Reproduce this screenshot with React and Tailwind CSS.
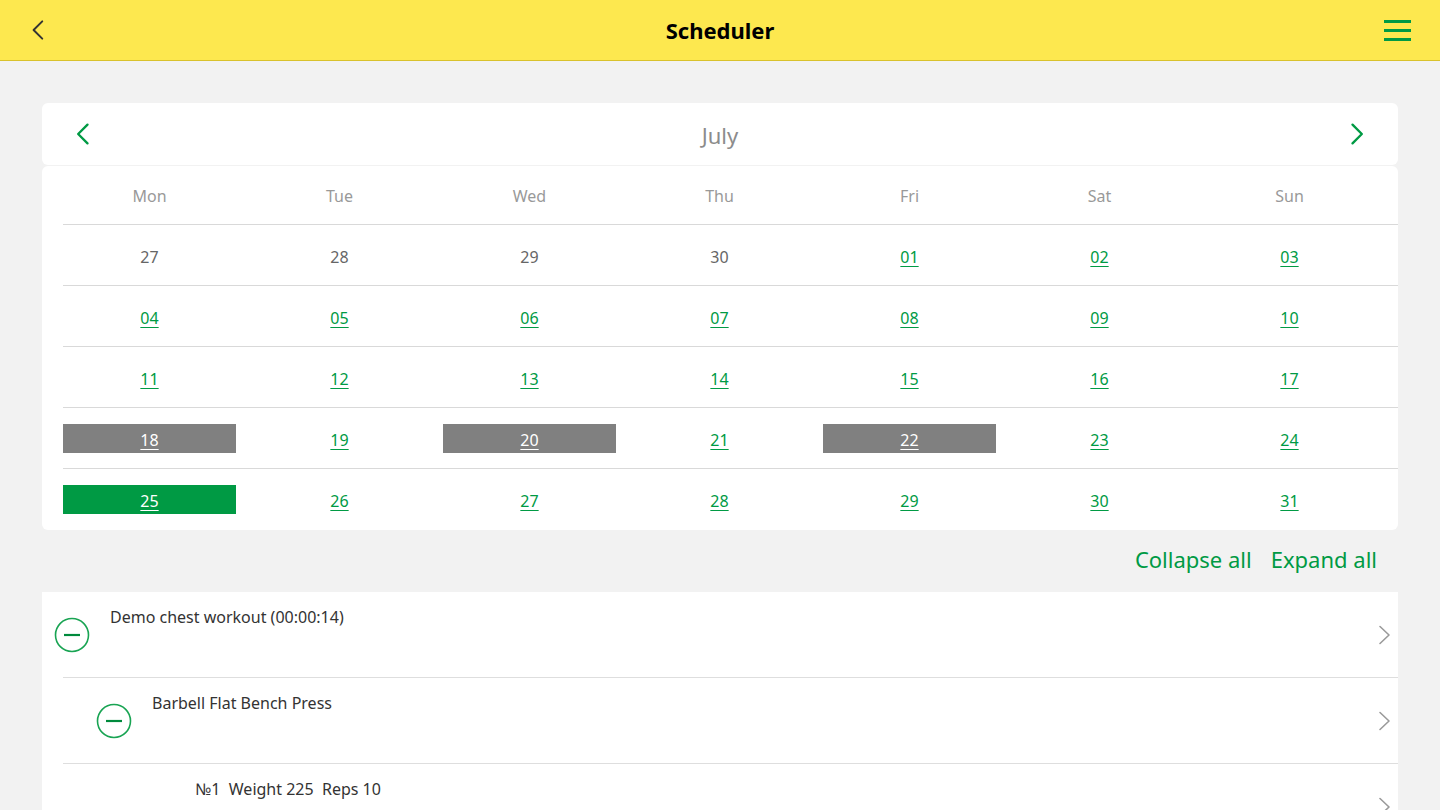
import React from "react";

function Chevron({ dir = "right", className = "", size = 24, stroke = 2 }) {
  const d = dir === "right" ? "M9 4l8 8-8 8" : "M15 4l-8 8 8 8";
  return (
    <svg width={size} height={size} viewBox="0 0 24 24" fill="none" className={className}>
      <path d={d} stroke="currentColor" strokeWidth={stroke} strokeLinecap="round" strokeLinejoin="round" />
    </svg>
  );
}

function ListChevron() {
  return (
    <svg width="14" height="20" viewBox="0 0 14 20" fill="none">
      <path d="M2 1.5l9 8.5-9 8.5" stroke="currentColor" strokeWidth="1.6" strokeLinecap="round" strokeLinejoin="round" />
    </svg>
  );
}

function MinusCircle() {
  return (
    <svg width="36" height="36" viewBox="0 0 36 36" fill="none">
      <circle cx="18" cy="18" r="16.5" stroke="#19a453" strokeWidth="1.6" />
      <line x1="10" y1="18" x2="26" y2="18" stroke="#008a3c" strokeWidth="2.2" />
    </svg>
  );
}

const weeks = [
  ["27", "28", "29", "30", "01", "02", "03"],
  ["04", "05", "06", "07", "08", "09", "10"],
  ["11", "12", "13", "14", "15", "16", "17"],
  ["18", "19", "20", "21", "22", "23", "24"],
  ["25", "26", "27", "28", "29", "30", "31"],
];
const days = ["Mon", "Tue", "Wed", "Thu", "Fri", "Sat", "Sun"];

function DayCell({ label, wi, di }) {
  const prev = wi === 0 && di < 4;
  const gray = wi === 3 && (di === 0 || di === 2 || di === 4);
  const green = wi === 4 && di === 0;
  let box = "";
  let txt = prev ? "text-[#666666]" : "text-[#009a44] underline underline-offset-[3px]";
  if (gray) { box = "bg-[#808080]"; txt = "text-white underline underline-offset-[3px]"; }
  if (green) { box = "bg-[#009a44]"; txt = "text-white underline underline-offset-[3px]"; }
  return (
    <div className="flex items-center">
      <div className={`w-[173px] h-[29px] flex items-center justify-center pt-[3px] ${box}`}>
        <span className={`text-[16px] leading-[22px] ${txt}`}>{label}</span>
      </div>
    </div>
  );
}

function ListRow({ indent, textLeft, text, icon, height = 85, sep = true }) {
  return (
    <div>
      <div className="relative flex" style={{ height }}>
        {icon && (
          <div className="absolute top-1/2 -translate-y-1/2" style={{ left: indent }}>
            <MinusCircle />
          </div>
        )}
        <div className="pt-[13px] text-[16px] text-[#333333]" style={{ paddingLeft: textLeft }}>
          {text}
        </div>
        <div className="absolute right-[6px] top-1/2 -translate-y-1/2 text-[#9a9a9a]">
          <ListChevron />
        </div>
      </div>
      {sep && <div className="ml-[21px] h-px bg-[#dedede]" />}
    </div>
  );
}

export default function App() {
  return (
    <div className="w-[1440px] h-[810px] overflow-hidden bg-[#f2f2f2]" style={{ fontFamily: '"Segoe UI", "Noto Sans", "Open Sans", sans-serif' }}>
      <header className="h-[61px] bg-[#fde84f] border-b border-[#d9c22c] flex items-center justify-between px-[26px]">
        <div className="text-[#333333] w-[40px]">
          <Chevron dir="left" size={26} stroke={1.8} />
        </div>
        <h1 className="text-[22px] font-bold text-black">Scheduler</h1>
        <div className="w-[40px] flex justify-end pr-[3px]">
          <div className="flex flex-col gap-[6px]">
            <div className="w-[27px] h-[3px] bg-[#009a44]" />
            <div className="w-[27px] h-[3px] bg-[#009a44]" />
            <div className="w-[27px] h-[3px] bg-[#009a44]" />
          </div>
        </div>
      </header>

      <div className="px-[42px] pt-[42px]">
        <div className="h-[62px] bg-white rounded-[6px] flex items-center justify-between px-[28px]">
          <Chevron dir="left" size={28} stroke={2} className="text-[#009a44]" />
          <span className="text-[22px] text-[#8c8c8c] pt-[2px]">July</span>
          <Chevron dir="right" size={28} stroke={2} className="text-[#009a44]" />
        </div>
        <div className="mt-px bg-white rounded-[6px] pl-[21px]">
          <div className="grid grid-cols-[repeat(6,190px)_1fr] h-[59px] border-b border-[#d9d9d9]">
            {days.map((d) => (
              <div key={d} className="flex items-center pt-[2px]">
                <div className="w-[173px] text-center text-[16px] text-[#999999]">{d}</div>
              </div>
            ))}
          </div>
          {weeks.map((w, wi) => (
            <div key={wi} className={`grid grid-cols-[repeat(6,190px)_1fr] h-[61px] ${wi < 4 ? "border-b border-[#d9d9d9]" : ""}`}>
              {w.map((d, di) => (
                <DayCell key={di} label={d} wi={wi} di={di} />
              ))}
            </div>
          ))}
        </div>

        <div className="h-[62px] flex items-center justify-end gap-[19px] pr-[21px] pb-[3px]">
          <span className="text-[22px] text-[#009a44]">Collapse all</span>
          <span className="text-[22px] text-[#009a44]">Expand all</span>
        </div>

        <div className="bg-white">
          <ListRow indent={12} textLeft={68} text="Demo chest workout (00:00:14)" icon />
          <ListRow indent={54} textLeft={110} text="Barbell Flat Bench Press" icon />
          <ListRow indent={0} textLeft={153} text={"№1\u00a0\u00a0Weight 225\u00a0\u00a0Reps 10"} sep={false} />
        </div>
      </div>
    </div>
  );
}
